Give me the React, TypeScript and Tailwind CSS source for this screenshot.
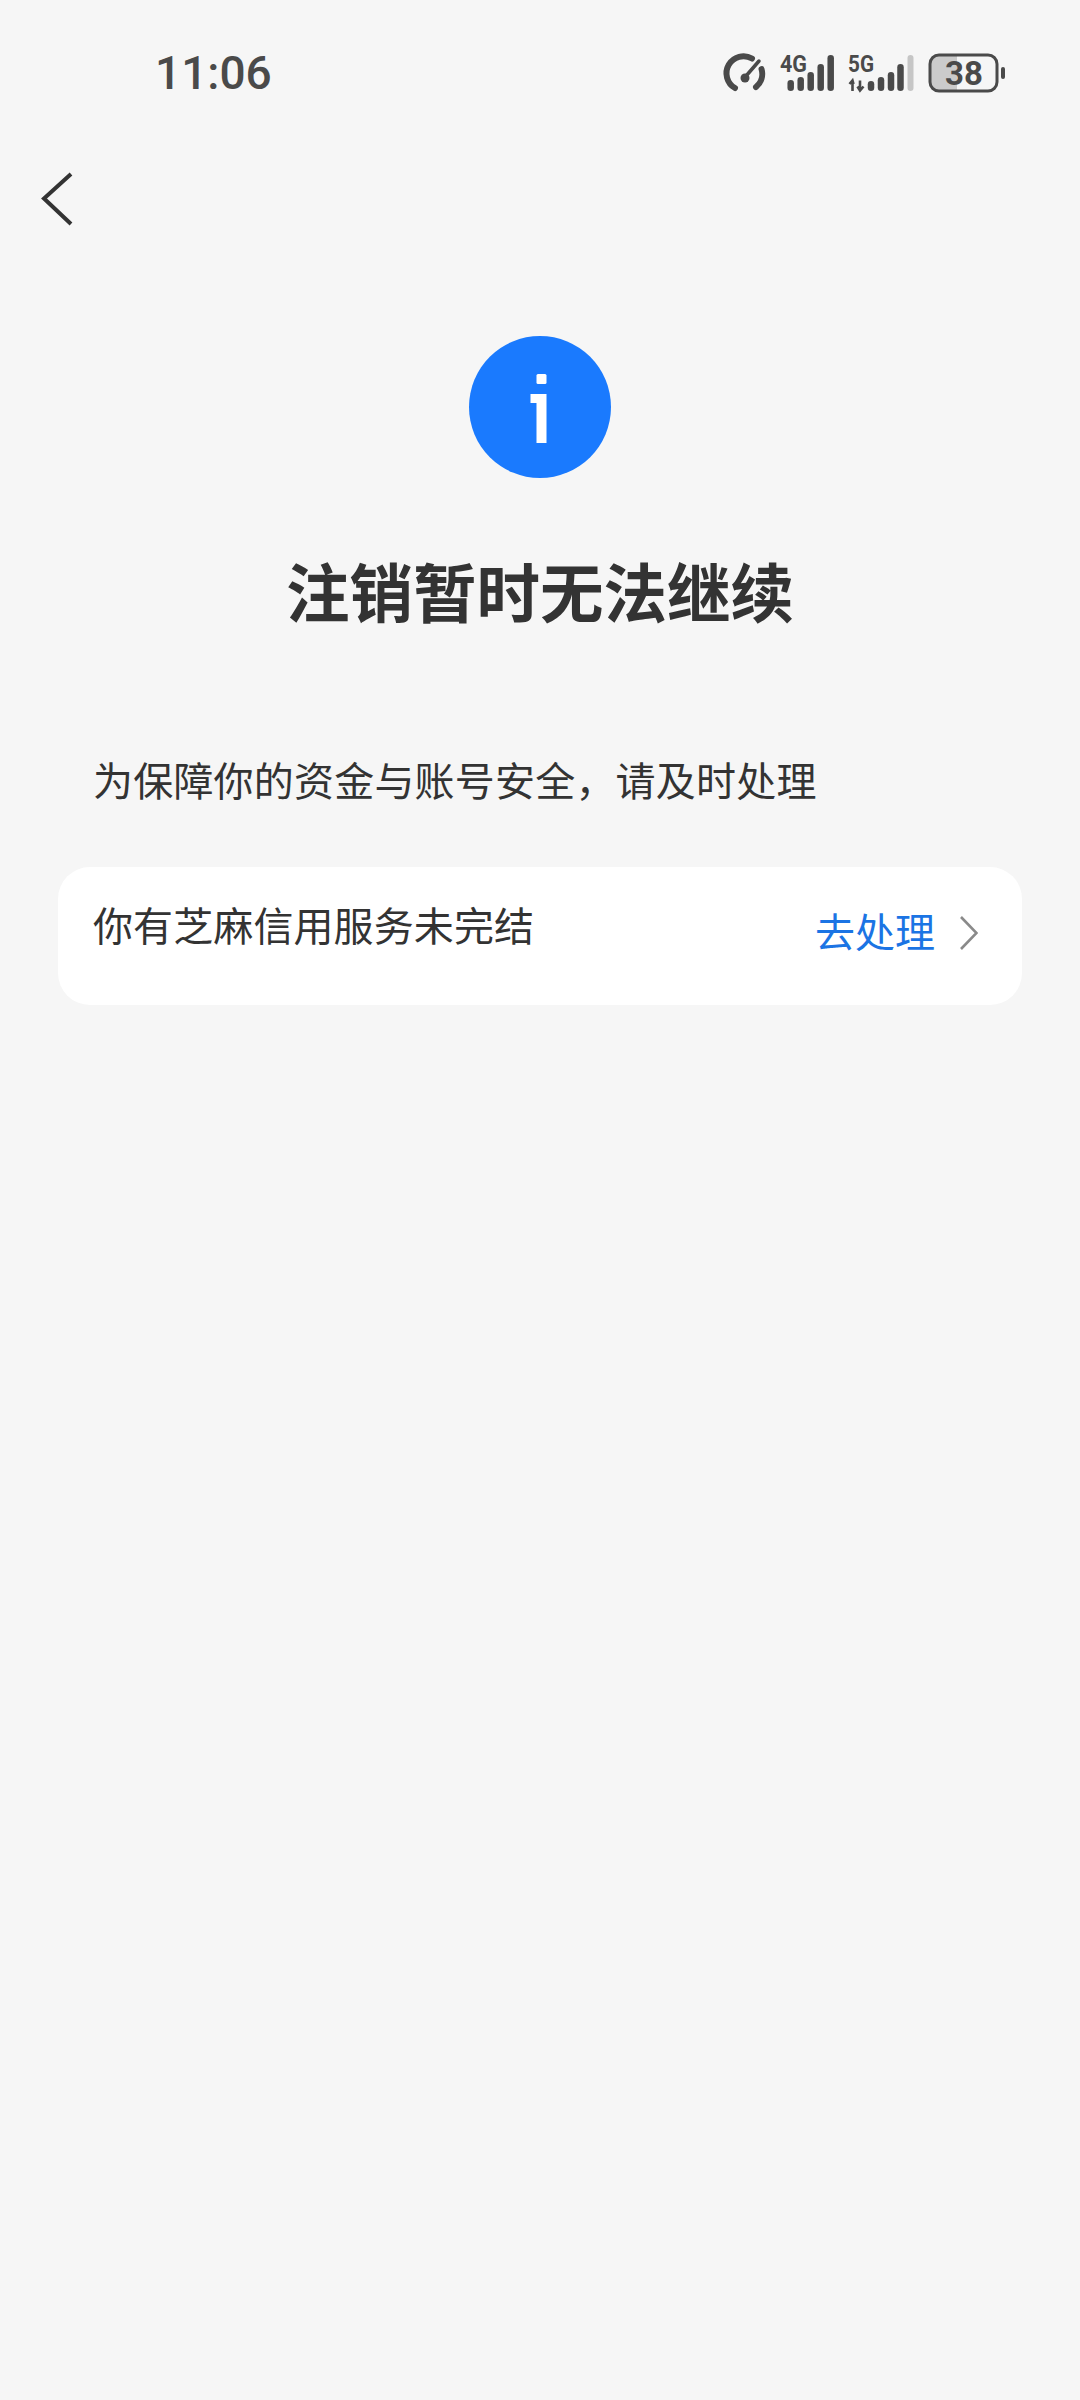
const cjk = 'font-["Noto_Sans_CJK_SC","Noto_Sans",sans-serif]'

function StatusIcons() {
  return (
    <svg width="290" height="54" viewBox="720 44 290 54" className="block" fill="none">
      {/* gauge */}
      <path d="M735 88 A17 17 0 0 1 752 58.5" stroke="#4a4a4a" strokeWidth="6" strokeLinecap="round" />
      <path d="M761.5 69 A17 17 0 0 1 756 87" stroke="#4a4a4a" strokeWidth="6" strokeLinecap="round" />
      <path d="M759 61 L746 76" stroke="#4a4a4a" strokeWidth="3.5" strokeLinecap="round" />
      <circle cx="745" cy="78" r="4.5" fill="#4a4a4a" />

      {/* 4G */}
      <text x="780" y="72" fontFamily="Roboto, sans-serif" fontWeight="700" fontSize="24" fill="#4a4a4a" textLength="27" lengthAdjust="spacingAndGlyphs">4G</text>
      {[[790.7, 80], [800.7, 77], [810.7, 72], [820.7, 64], [830.7, 55]].map(([x, top]) => (
        <rect key={x} x={x - 3.25} y={top} width="6.5" height={91 - top} rx="3.25" fill="#4a4a4a" />
      ))}

      {/* 5G */}
      <text x="848" y="72" fontFamily="Roboto, sans-serif" fontWeight="700" fontSize="24" fill="#4a4a4a" textLength="26" lengthAdjust="spacingAndGlyphs">5G</text>
      <path d="M852.5 91 V81 M849.5 84 L852.5 80.5 L853.5 84" stroke="#4a4a4a" strokeWidth="2.6" />
      <path d="M860 80.5 V90 M857.5 86.5 L860 90.5 L863.5 86.5" stroke="#4a4a4a" strokeWidth="2.6" />
      {[[871, 81], [881, 77], [891, 72], [900.5, 64]].map(([x, top]) => (
        <rect key={x} x={x - 3.25} y={top} width="6.5" height={91 - top} rx="3.25" fill="#4a4a4a" />
      ))}
      <rect x="907.5" y="55" width="6" height="36" rx="3" fill="#c6c6c6" />

      {/* battery */}
      <path d="M939 56 H957 V90.5 H939 A8 8 0 0 1 931 82.5 V64 A8 8 0 0 1 939 56 Z" fill="#cbcbcb" />
      <rect x="930" y="55" width="67" height="36" rx="9" stroke="#4a4a4a" strokeWidth="3" />
      <text x="964" y="85" textAnchor="middle" fontFamily="Roboto, sans-serif" fontWeight="700" fontSize="33" fill="#4a4a4a">38</text>
      <rect x="1001" y="67" width="4" height="12" rx="2" fill="#4a4a4a" />
    </svg>
  )
}

export default function App() {
  return (
    <div className={`min-h-screen w-[1080px] bg-[#f6f6f6] ${cjk}`}>
      <div className="flex items-center justify-between pl-[155px] pr-[70px] pt-[44px]">
        <span className="mt-[4px] font-['Roboto',sans-serif] text-[46px] leading-[40px] font-medium text-[#4a4a4a]">11:06</span>
        <StatusIcons />
      </div>

      <div className="mt-[74px] pl-[41px]">
        <svg width="32" height="54" viewBox="0 0 32 54" fill="none" className="block">
          <path d="M30 2 L3 26.5 L30 52" stroke="#333333" strokeWidth="4" />
        </svg>
      </div>

      <div className="mt-[110px] flex flex-col items-center">
        <div className="relative h-[142px] w-[142px] rounded-full bg-[#1a7afe]">
          <svg width="18" height="70" viewBox="0 0 18 70" fill="white" className="absolute left-[61px] top-[38px]">
            <rect x="6.5" y="0" width="10" height="10" rx="1.5" />
            <path d="M0.5 20 H16.5 V69 H6.5 V29 H0.5 Z" />
          </svg>
        </div>
        <h1 className="mt-[66px] text-[63.5px] leading-[90px] font-bold text-[#333333]">注销暂时无法继续</h1>
      </div>

      <p className="mt-[115px] pl-[93px] text-[40px] leading-[60px] tracking-[0.2px] text-[#333333]">为保障你的资金与账号安全，请及时处理</p>

      <div className="mx-[58px] mt-[58px] flex h-[138px] items-start justify-between rounded-[32px] bg-white pl-[35px] pr-[44px] pt-[27px]">
        <span className="text-[40px] leading-[60px] tracking-[0.1px] text-[#333333]">你有芝麻信用服务未完结</span>
        <div className="mt-[6px] flex h-[66px] items-center gap-[25px]">
          <span className="pb-[6px] text-[40px] leading-[60px] text-[#1b74e4]">去处理</span>
          <svg width="18" height="34" viewBox="0 0 18 34" fill="none" className="block">
            <path d="M1 1 L16.5 17 L1 33" stroke="#8a8a8a" strokeWidth="2.6" />
          </svg>
        </div>
      </div>
    </div>
  )
}
